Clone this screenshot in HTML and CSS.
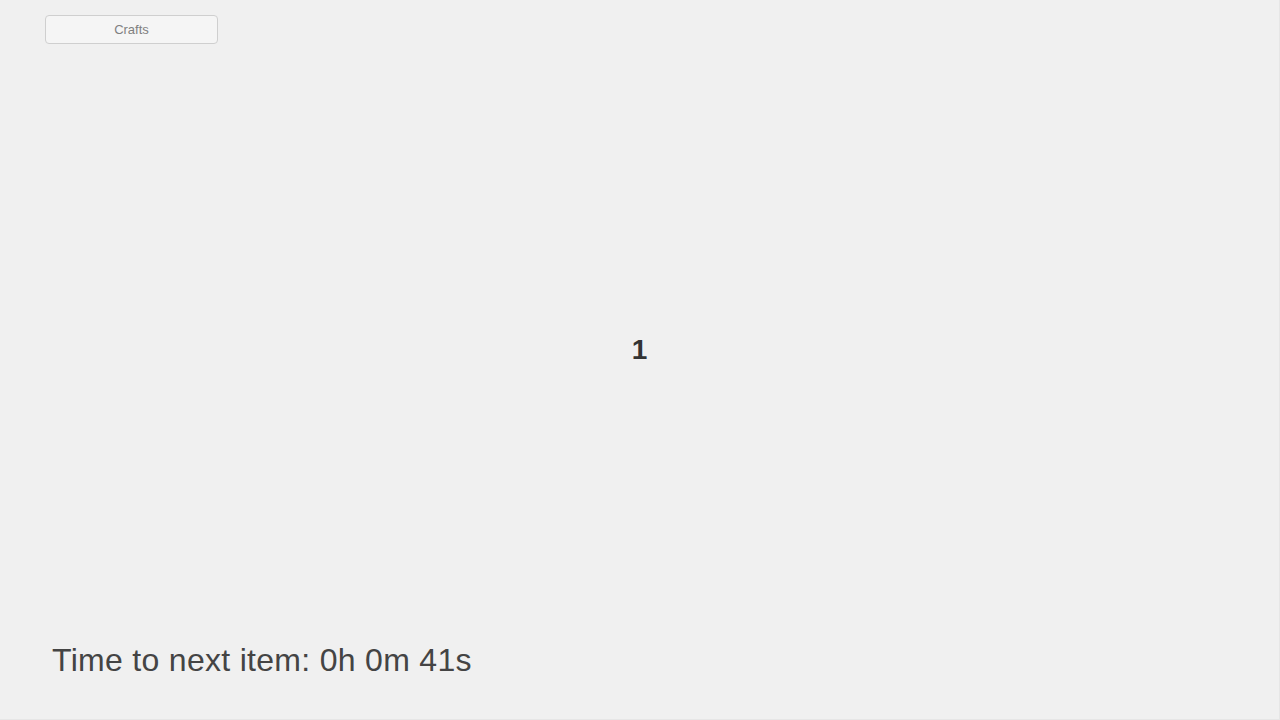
FILE: index.html
```html
<!DOCTYPE html>
<html>
<head>
<meta charset="utf-8">
<link rel="stylesheet" href="styles.css">
</head>
<body>
<div class="app">
  <div class="top">
    <button class="btn">Crafts</button>
  </div>
  <div class="center">
    <span class="count">1</span>
  </div>
  <div class="bottom">
    <span class="timer">Time to next item: 0h 0m 41s</span>
  </div>
</div>
</body>
</html>
```
FILE: styles.css
```css
html, body {
  margin: 0;
  padding: 0;
  background: #f0f0f0;
}
.app {
  width: 1280px;
  height: 720px;
  box-sizing: border-box;
  display: flex;
  flex-direction: column;
  font-family: "Liberation Sans", Arial, sans-serif;
  border-right: 1px solid #e6e6e6;
  border-bottom: 1px solid #e6e6e6;
}
.top {
  padding: 15px 0 0 45px;
}
.btn {
  width: 173px;
  height: 29px;
  box-sizing: border-box;
  border: 1px solid #cfcfcf;
  border-radius: 4px;
  background: #f5f5f5;
  color: #808080;
  font-family: "Liberation Sans", Arial, sans-serif;
  font-size: 13px;
  padding: 0;
  display: block;
}
.center {
  flex: 1;
  display: flex;
  align-items: center;
  justify-content: center;
}
.count {
  font-size: 28px;
  font-weight: bold;
  color: #333;
  margin-top: 14px;
}
.bottom {
  padding: 0 0 40px 52px;
}
.timer {
  font-size: 32px;
  letter-spacing: 0.3px;
  color: #444;
}
```
